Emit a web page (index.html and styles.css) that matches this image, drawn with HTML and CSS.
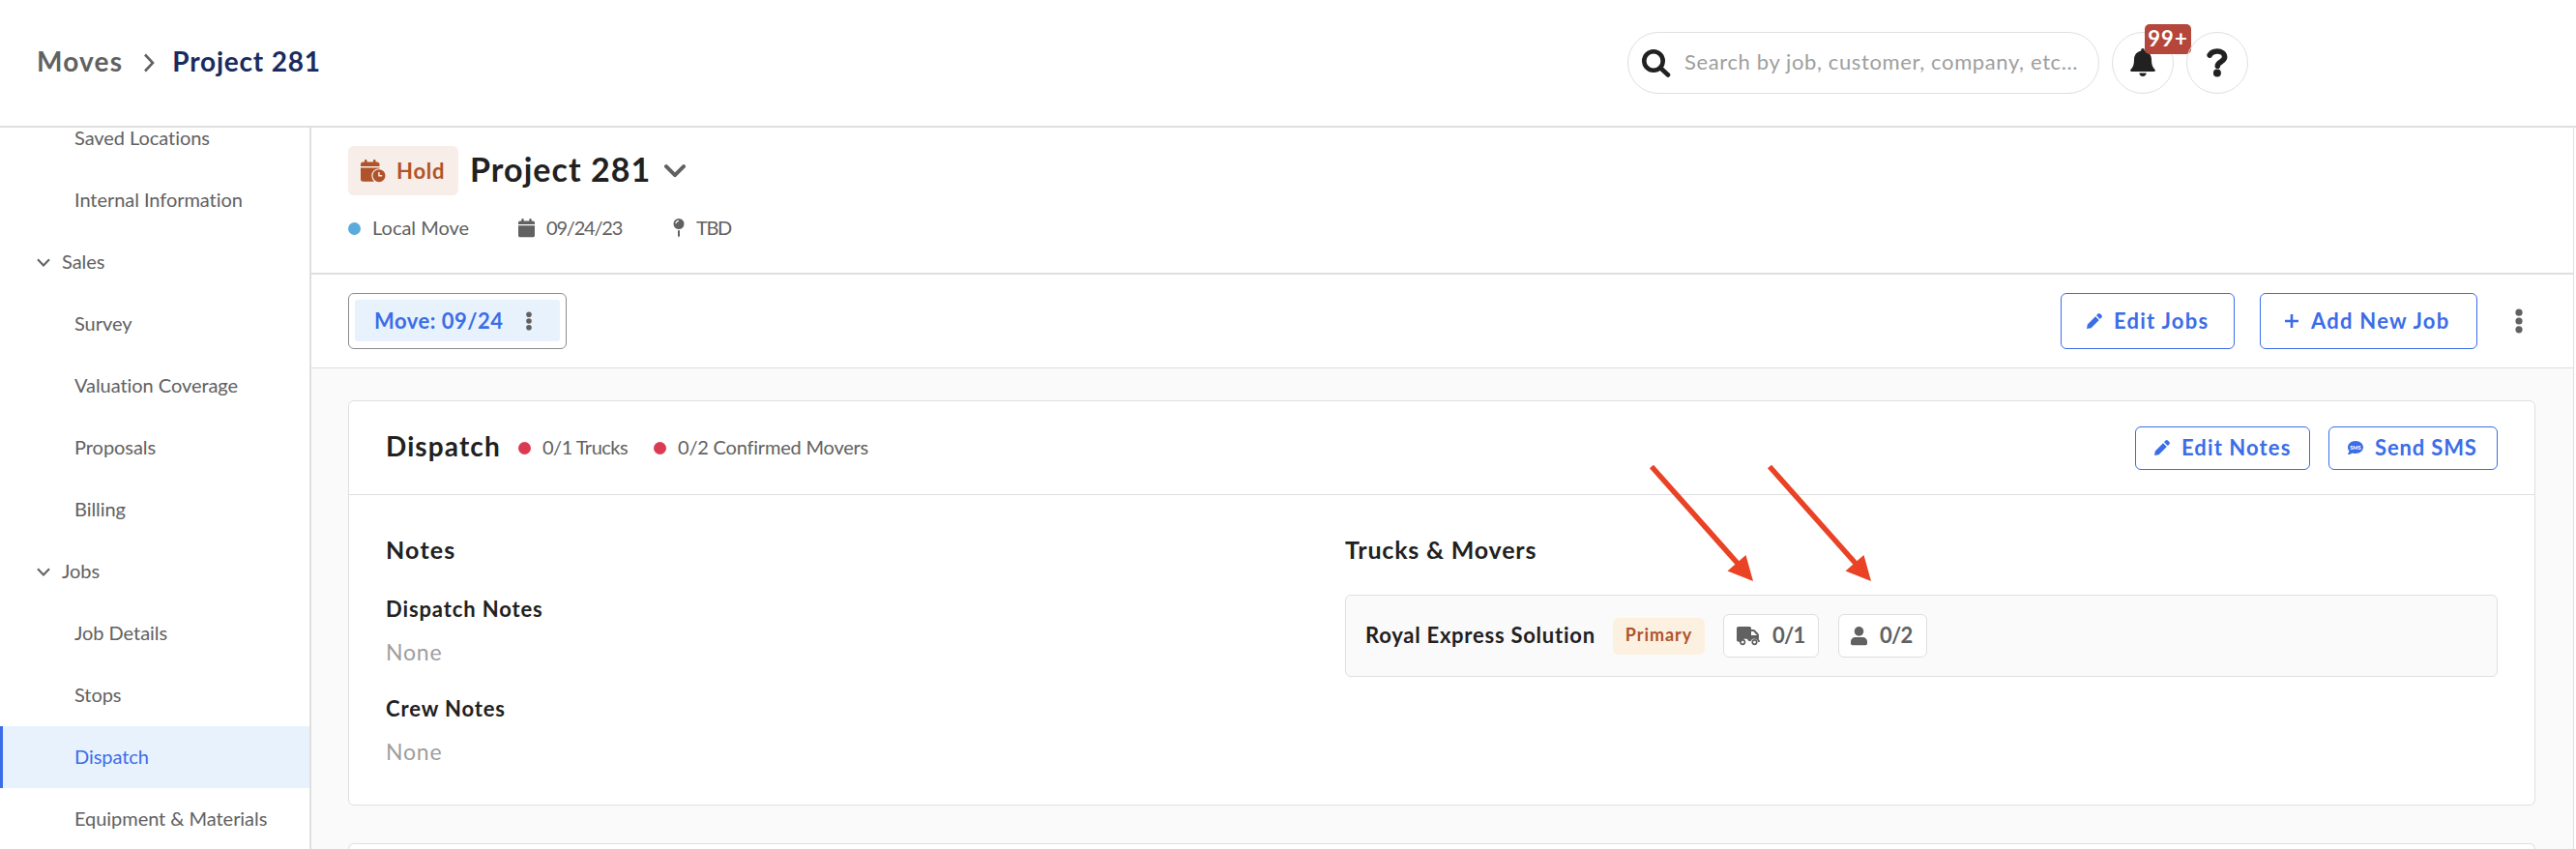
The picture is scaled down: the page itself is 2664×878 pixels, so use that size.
FILE: index.html
```html
<!DOCTYPE html>
<html lang="en">
<head>
  <meta charset="UTF-8">
  <meta name="viewport" content="width=device-width, initial-scale=1.0">
  <title>Project 281 - Moves</title>
  <link rel="stylesheet" href="styles.css">
</head>
<body>
  <header class="topbar">
    <nav class="breadcrumbs">
      <a class="crumb">Moves</a>
      <svg class="crumb-arrow" width="12" height="20" viewBox="0 0 12 20"><path d="M2 1.500 10 10 2 18.500" /></svg>
      <a class="crumb current">Project 281</a>
    </nav>
    <div class="top-actions">
      <div class="search">
        <svg width="30" height="29" viewBox="0 0 30 29"><circle cx="12" cy="12" r="9.700"/><path d="M19.500 19.500 27 26.500"/></svg>
        <span>Search by job, customer, company, etc...</span>
      </div>
      <div class="round-btn">
        <svg width="26" height="30" viewBox="0 0 26 30">
          <path d="M13 0c1 0 1.800.8 1.800 1.900v.7c4.200.9 7.200 4.400 7.200 9 0 5 1 7.900 3.600 10.400.6.700.2 2-.9 2H1.300c-1.100 0-1.500-1.300-.9-2C3 19.500 4 16.600 4 11.600c0-4.600 3-8.100 7.200-9v-.7C11.200.8 12 0 13 0z"/>
          <path d="M9.400 25.500h7.200c0 2-1.600 3.500-3.600 3.500s-3.600-1.500-3.600-3.500z"/>
        </svg>
        <span class="count">99+</span>
      </div>
      <div class="round-btn">
        <svg width="22" height="30" viewBox="0 0 22 30">
          <path class="q" d="M3.200 7C4.800 4.300 7.500 3 11 3c4.200 0 7.600 2.300 7.600 6 0 4.800-7.300 4.700-7.300 9.300"/>
          <circle cx="10.900" cy="25.400" r="4"/>
        </svg>
      </div>
    </div>
  </header>

  <div class="layout">
    <aside class="sidebar">
      <ul class="menu">
        <li>Saved Locations</li>
        <li>Internal Information</li>
        <li class="group"><svg width="14" height="9" viewBox="0 0 14 9"><path d="M1 1.200 7 7.500 13 1.200"/></svg>Sales</li>
        <li>Survey</li>
        <li>Valuation Coverage</li>
        <li>Proposals</li>
        <li>Billing</li>
        <li class="group"><svg width="14" height="9" viewBox="0 0 14 9"><path d="M1 1.200 7 7.500 13 1.200"/></svg>Jobs</li>
        <li>Job Details</li>
        <li>Stops</li>
        <li class="active">Dispatch</li>
        <li>Equipment &amp; Materials</li>
      </ul>
    </aside>

    <main class="main">
      <section class="project">
        <div class="title-row">
          <span class="status">
            <svg width="26" height="24" viewBox="0 0 26 24">
              <path d="M4 2.500V1.200C4 .5 4.500 0 5.200 0s1.300.5 1.300 1.200v1.300h6.500V1.200c0-.7.6-1.200 1.300-1.200s1.200.5 1.200 1.200v1.300h1.500c1.300 0 2.500 1 2.500 2.400V7H0V4.900c0-1.400 1.200-2.400 2.500-2.400z"/>
              <path d="M0 8.500h19.500v.8c-4.700 0-8.200 3.100-8.200 7.300 0 2.500 1 4.600 2.700 6.100H2.500C1.200 22.700 0 21.700 0 20.400z"/>
              <path fill-rule="evenodd" d="M19 10.200a6.500 6.500 0 1 1 0 13 6.500 6.500 0 0 1 0-13zm-.8 2.800v4.600h4v-1.500h-2.500V13z"/>
            </svg>
            <span>Hold</span>
          </span>
          <h1>Project 281</h1>
          <svg class="title-arrow" width="22" height="14" viewBox="0 0 22 14"><path d="M2 2.200 11 11.200 20 2.200"/></svg>
        </div>
        <div class="meta">
          <span class="dot blue"></span>
          <span class="meta-text type">Local Move</span>
          <svg width="17" height="20" viewBox="0 0 17 20"><path d="M3.300 2.500V1.200a1.200 1.200 0 0 1 2.400 0v1.300h5.600V1.200a1.200 1.200 0 0 1 2.400 0v1.300h1.500c1 0 1.800.8 1.800 1.800V6H0V4.300c0-1 .8-1.800 1.800-1.800zM0 7.300h17v10.200c0 1-.8 1.800-1.800 1.800H1.800c-1 0-1.800-.8-1.800-1.800z"/></svg>
          <span class="meta-text date">09/24/23</span>
          <svg width="12" height="20" viewBox="0 0 12 20"><path fill-rule="evenodd" d="M6 0a5.500 5.500 0 1 1 0 11A5.500 5.500 0 0 1 6 0zm0 1.800c-2 0-3.600 1.500-3.600 3.500h1.100c0-1.400 1.100-2.400 2.500-2.400z"/><path d="M5 12.200h2v5.500L6 19.500l-1-1.800z"/></svg>
          <span class="meta-text place">TBD</span>
        </div>
      </section>

      <section class="tabs">
        <div class="tab">
          <div class="tab-inner">
            <span>Move: 09/24</span>
            <svg width="6" height="20" viewBox="0 0 6 20"><circle cx="3" cy="3.300" r="2.800"/><circle cx="3" cy="10" r="2.800"/><circle cx="3" cy="16.700" r="2.800"/></svg>
          </div>
        </div>
        <div class="job-actions">
          <button class="btn edit-jobs">
            <svg width="16" height="16" viewBox="0 0 16 16"><path d="M9 3.200 12.800 7 4.600 15.200 0 16l.8-4.600zM10 2.200 11.600.6a1.600 1.600 0 0 1 2.300 0l1.500 1.500c.6.600.6 1.700 0 2.300L13.800 6z"/></svg>
            <span>Edit Jobs</span>
          </button>
          <button class="btn add-job">
            <svg width="14" height="14" viewBox="0 0 14 14"><path d="M5.700 0h2.600v5.700H14v2.600H8.300V14H5.700V8.300H0V5.700h5.700z"/></svg>
            <span>Add New Job</span>
          </button>
          <svg class="more" width="8" height="26" viewBox="0 0 8 26"><circle cx="4" cy="4.200" r="3.600"/><circle cx="4" cy="13" r="3.600"/><circle cx="4" cy="21.800" r="3.600"/></svg>
        </div>
      </section>

      <section class="content">
        <div class="card">
          <div class="card-head">
            <h2>Dispatch</h2>
            <span class="dot red"></span>
            <span class="stat trucks">0/1 Trucks</span>
            <span class="dot red"></span>
            <span class="stat movers">0/2 Confirmed Movers</span>
            <div class="card-actions">
              <button class="btn small edit-notes">
                <svg width="16" height="16" viewBox="0 0 16 16"><path d="M9 3.200 12.800 7 4.600 15.200 0 16l.8-4.600zM10 2.200 11.600.6a1.600 1.600 0 0 1 2.300 0l1.500 1.500c.6.600.6 1.700 0 2.300L13.800 6z"/></svg>
                <span>Edit Notes</span>
              </button>
              <button class="btn small send-sms">
                <svg width="16" height="14" viewBox="0 0 16 14">
                  <path d="M8 0c4.400 0 8 2.900 8 6.500S12.400 13 8 13c-1.100 0-2.200-.2-3.200-.6C3.800 13.200 2.200 14 .4 14c-.4 0-.5-.4-.3-.7.500-.6 1.200-1.700 1.400-2.700C.600 9.500 0 8.100 0 6.500 0 2.900 3.600 0 8 0z"/>
                  <text class="sms-text" x="8" y="8.600">SMS</text>
                </svg>
                <span>Send SMS</span>
              </button>
            </div>
          </div>
          <div class="card-body">
            <div class="notes">
              <h3>Notes</h3>
              <h4>Dispatch Notes</h4>
              <p>None</p>
              <h4>Crew Notes</h4>
              <p>None</p>
            </div>
            <div class="crew">
              <h3 class="crew-title">Trucks &amp; Movers</h3>
              <div class="company">
                <span class="company-name">Royal Express Solution</span>
                <span class="tag">Primary</span>
                <span class="chip chip-truck">
                  <svg width="24" height="20" viewBox="0 0 24 20">
                    <path fill-rule="evenodd" d="M1.800 0h11.500c1 0 1.700.8 1.700 1.700V3h2.400c.5 0 1 .2 1.400.6l3.500 3.700c.4.400.6.900.6 1.400v5.100c.6 0 1 .5 1 1.100s-.4 1.100-1 1.100h-.7a4 4 0 0 0-7.600-1h-2.200a4 4 0 0 0-7.600 1C2.700 16 0 15.800 0 14V1.700C0 .8.800 0 1.800 0zM15 5v4h5.800v-.3L17.300 5z"/>
                    <path fill-rule="evenodd" d="M6.200 13a3 3 0 1 1 0 6.200 3 3 0 0 1 0-6.200zm0 1.700a1.400 1.400 0 1 0 0 2.800 1.400 1.400 0 0 0 0-2.800zM18.500 13a3 3 0 1 1 0 6.200 3 3 0 0 1 0-6.200zm0 1.700a1.400 1.400 0 1 0 0 2.800 1.400 1.400 0 0 0 0-2.800z"/>
                  </svg>
                  <span>0/1</span>
                </span>
                <span class="chip chip-mover">
                  <svg width="17" height="20" viewBox="0 0 17 20"><circle cx="8.500" cy="4.900" r="4.800"/><path d="M4.800 11h7.400c2.600 0 4.800 2 4.800 4.600V17.600c0 .9-.8 1.700-1.700 1.700H1.700C.8 19.300 0 18.500 0 17.600v-2C0 13 2.200 11 4.800 11z"/></svg>
                  <span>0/2</span>
                </span>
              </div>
            </div>
          </div>
          <!-- arrows pointing at the truck and mover counts -->
          <svg class="arrows" width="240" height="126" viewBox="0 0 240 126">
            <g id="arrow"><path class="shaft" d="M4 4.500 96 108"/><path class="head" d="M109 123 82.500 112.500 101.500 96z"/></g>
            <use href="#arrow" x="122"/>
          </svg>
        </div>
        <div class="card next"></div>
      </section>
    </main>
  </div>
</body>
</html>
```
FILE: styles.css
```css
:root {
  --line: #dfdfdf;
  --text: #212121;
  --muted: #616161;
  --light: #9e9e9e;
  --blue: #3b6de8;
  --blue-bg: #e8f2fd;
  --rust: #b0532a;
}
* {
  box-sizing: border-box;
}
body {
  margin: 0;
  height: 878px;
  overflow: hidden;
  font-family: Lato, sans-serif;
  font-size: 20px;
  background: #fff;
  color: var(--muted);
}
h1, h2, h3, h4, p, ul {
  margin: 0;
  padding: 0;
}
svg {
  display: block;
  flex: none;
  fill: currentColor;
}
span, a {
  white-space: nowrap;
}

/* top bar */
.topbar {
  display: flex;
  justify-content: space-between;
  align-items: center;
  height: 132px;
  padding: 0 339px 0 38px;
  border-bottom: 2px solid var(--line);
}
.breadcrumbs {
  display: flex;
  align-items: center;
}
.crumb {
  padding-bottom: 5px;
  font-size: 28px;
  font-weight: 700;
  letter-spacing: 1.2px;
}
.current {
  color: #1a2b5f;
  letter-spacing: 0.8px;
}
.crumb-arrow {
  margin: 0 18px 0 21px;
  fill: none;
  stroke: var(--muted);
  stroke-width: 2.6;
}
.top-actions {
  display: flex;
  gap: 13px;
}
.search {
  display: flex;
  align-items: center;
  width: 488px;
  height: 64px;
  padding-left: 14px;
  border: 1px solid var(--line);
  border-radius: 32px;
  color: #9e9e9e;
  font-size: 22px;
  letter-spacing: 0.62px;
}
.search svg {
  margin-right: 14px;
  fill: none;
  stroke: var(--text);
  stroke-width: 4.6;
  stroke-linecap: round;
}
.search span {
  padding-bottom: 3px;
}
.round-btn {
  position: relative;
  display: flex;
  align-items: center;
  justify-content: center;
  width: 64px;
  height: 64px;
  border: 1px solid var(--line);
  border-radius: 50%;
  color: var(--text);
}
.q {
  fill: none;
  stroke: var(--text);
  stroke-width: 5.6;
  stroke-linecap: round;
}
.count {
  position: absolute;
  top: -9px;
  left: 33px;
  width: 48px;
  height: 31px;
  border-radius: 5px;
  background: #b5463b;
  color: #fff;
  font-size: 22px;
  font-weight: 700;
  line-height: 29px;
  letter-spacing: 1px;
  text-align: center;
}

/* sidebar */
.layout {
  display: flex;
  height: 746px;
}
.sidebar {
  width: 322px;
  overflow: hidden;
  border-right: 2px solid var(--line);
}
.menu {
  margin-top: -21px;
  list-style: none;
}
.menu li {
  display: flex;
  align-items: center;
  height: 64px;
  padding: 0 0 2px 77px;
  line-height: 18px;
  letter-spacing: -0.05px;
}
.menu .group {
  padding-left: 38px;
}
.group svg {
  margin: 3px 12px 0 0;
  fill: none;
  stroke: var(--muted);
  stroke-width: 2;
}
.menu .active {
  padding-left: 74px;
  border-left: 3px solid var(--blue);
  background: var(--blue-bg);
  color: var(--blue);
}

/* project header */
.main {
  width: 2340px;
  border-right: 1px solid var(--line);
  background: #fafafa;
}
.project {
  height: 152px;
  padding: 19px 38px 0;
  border-bottom: 2px solid var(--line);
  background: #fff;
}
.title-row {
  display: flex;
  align-items: center;
  height: 51px;
}
.status {
  display: flex;
  align-items: center;
  width: 114px;
  height: 51px;
  padding-left: 13px;
  border-radius: 6px;
  background: #f7ede9;
  color: var(--rust);
  font-size: 22px;
  font-weight: 700;
  letter-spacing: 0.8px;
}
.status svg {
  margin-right: 11px;
}
.status span {
  padding-bottom: 1px;
}
h1 {
  padding: 0 0 4px;
  margin-left: 12px;
  color: var(--text);
  font-size: 34px;
  font-weight: 700;
  letter-spacing: 1.05px;
}
.title-arrow {
  margin-left: 14px;
  fill: none;
  stroke: var(--muted);
  stroke-width: 4;
  stroke-linecap: round;
  stroke-linejoin: round;
}
.meta {
  display: flex;
  align-items: center;
  height: 24px;
  margin-top: 22px;
}
.meta-text {
  padding-bottom: 3px;
}
.dot {
  flex: none;
  width: 13px;
  height: 13px;
  border-radius: 50%;
}
.blue {
  background: #5aaadc;
}
.red {
  background: #da3b52;
}
.type {
  width: 151px;
  margin-left: 12px;
}
.date {
  width: 131px;
  margin-left: 12px;
  letter-spacing: -1.2px;
}
.place {
  margin-left: 12px;
  letter-spacing: -1.4px;
}

/* job tabs */
.tabs {
  display: flex;
  justify-content: space-between;
  height: 97px;
  padding: 19px 52px 0 38px;
  border-bottom: 1px solid var(--line);
  background: #fff;
}
.tab {
  width: 226px;
  height: 58px;
  padding: 6px;
  border: 1px solid #8c8c8c;
  border-radius: 6px;
}
.tab-inner {
  display: flex;
  align-items: center;
  height: 43px;
  padding-left: 20px;
  border-radius: 3px;
  background: var(--blue-bg);
}
.tab-inner span {
  padding-bottom: 1px;
  color: var(--blue);
  font-size: 22px;
  font-weight: 700;
  letter-spacing: 0.5px;
}
.tab-inner svg {
  margin-left: 23px;
}
.job-actions {
  display: flex;
  align-items: flex-start;
}
.btn {
  display: flex;
  align-items: center;
  height: 58px;
  padding: 0 0 0 26px;
  border: 1px solid var(--blue);
  border-radius: 6px;
  background: #fff;
  color: var(--blue);
  font-family: inherit;
  font-size: 22px;
  font-weight: 700;
  letter-spacing: 1.25px;
}
.btn span {
  margin-left: 12px;
  padding-bottom: 2px;
}
.edit-jobs {
  width: 180px;
}
.add-job {
  width: 225px;
  margin-left: 26px;
  padding-left: 25px;
}
.add-job span {
  margin-left: 13px;
}
.more {
  margin: 16px 0 0 39px;
}
.small {
  height: 45px;
  padding-left: 19px;
}

/* dispatch card */
.content {
  padding: 33px 39px 0 38px;
}
.card {
  position: relative;
  height: 419px;
  border: 1px solid var(--line);
  border-radius: 6px;
  background: #fff;
}
.next {
  height: 6px;
  margin-top: 39px;
  border-bottom: 0;
  border-radius: 6px 6px 0 0;
}
.card-head {
  display: flex;
  align-items: center;
  height: 97px;
  padding: 0 38px 0 38px;
  border-bottom: 1px solid var(--line);
}
h2 {
  width: 137px;
  padding-bottom: 5px;
  color: var(--text);
  font-size: 28px;
  font-weight: 700;
  letter-spacing: 1.1px;
}
.stat {
  margin-left: 12px;
  padding-bottom: 2px;
}
.trucks {
  width: 115px;
  letter-spacing: -0.5px;
}
.movers {
  letter-spacing: -0.2px;
}
.card-actions {
  display: flex;
  gap: 19px;
  margin-left: auto;
}
.edit-notes {
  width: 181px;
  letter-spacing: 1.1px;
}
.send-sms {
  width: 175px;
  letter-spacing: 0.85px;
}
.sms-text {
  fill: #fff;
  font-size: 5.5px;
  font-weight: 900;
  letter-spacing: 0;
  text-anchor: middle;
}
.card-body {
  display: grid;
  grid-template-columns: 992px 1fr;
  padding: 41px 38px 0 38px;
}
h3 {
  margin-bottom: 32px;
  color: var(--text);
  font-size: 25px;
  font-weight: 700;
  line-height: 30px;
  letter-spacing: 1.2px;
}
.crew-title {
  letter-spacing: 0.8px;
}
h4 {
  padding-top: 1px;
  color: var(--text);
  font-size: 22px;
  font-weight: 700;
  line-height: 28px;
  letter-spacing: 0.88px;
}
.notes p {
  margin: 16px 0 30px;
  color: var(--light);
  font-size: 23px;
  line-height: 28px;
  letter-spacing: 0.8px;
}
.company {
  display: flex;
  align-items: center;
  height: 85px;
  padding-left: 20px;
  border: 1px solid var(--line);
  border-radius: 6px;
  background: #fafafa;
}
.company-name {
  width: 256px;
  padding-bottom: 3px;
  color: var(--text);
  font-size: 22px;
  font-weight: 700;
  letter-spacing: 0.75px;
}
.tag {
  width: 95px;
  height: 38px;
  border-radius: 6px;
  background: #fcf1e0;
  color: var(--rust);
  font-size: 18px;
  font-weight: 700;
  line-height: 35px;
  letter-spacing: 0.95px;
  text-align: center;
}
.chip {
  display: flex;
  align-items: center;
  height: 45px;
  padding-left: 13px;
  border: 1px solid var(--line);
  border-radius: 6px;
  background: #fff;
  font-size: 22px;
  font-weight: 700;
  letter-spacing: -0.8px;
}
.chip span {
  padding-bottom: 3px;
}
.chip-truck {
  width: 99px;
  margin-left: 19px;
}
.chip-mover {
  width: 92px;
  margin-left: 20px;
  padding-left: 12px;
}
.chip svg {
  margin-right: 13px;
}
.arrows {
  position: absolute;
  top: 63px;
  left: 1343px;
}
.arrows .head {
  fill: #e94225;
}
.shaft {
  fill: none;
  stroke: #e94225;
  stroke-width: 5.5;
}
```
